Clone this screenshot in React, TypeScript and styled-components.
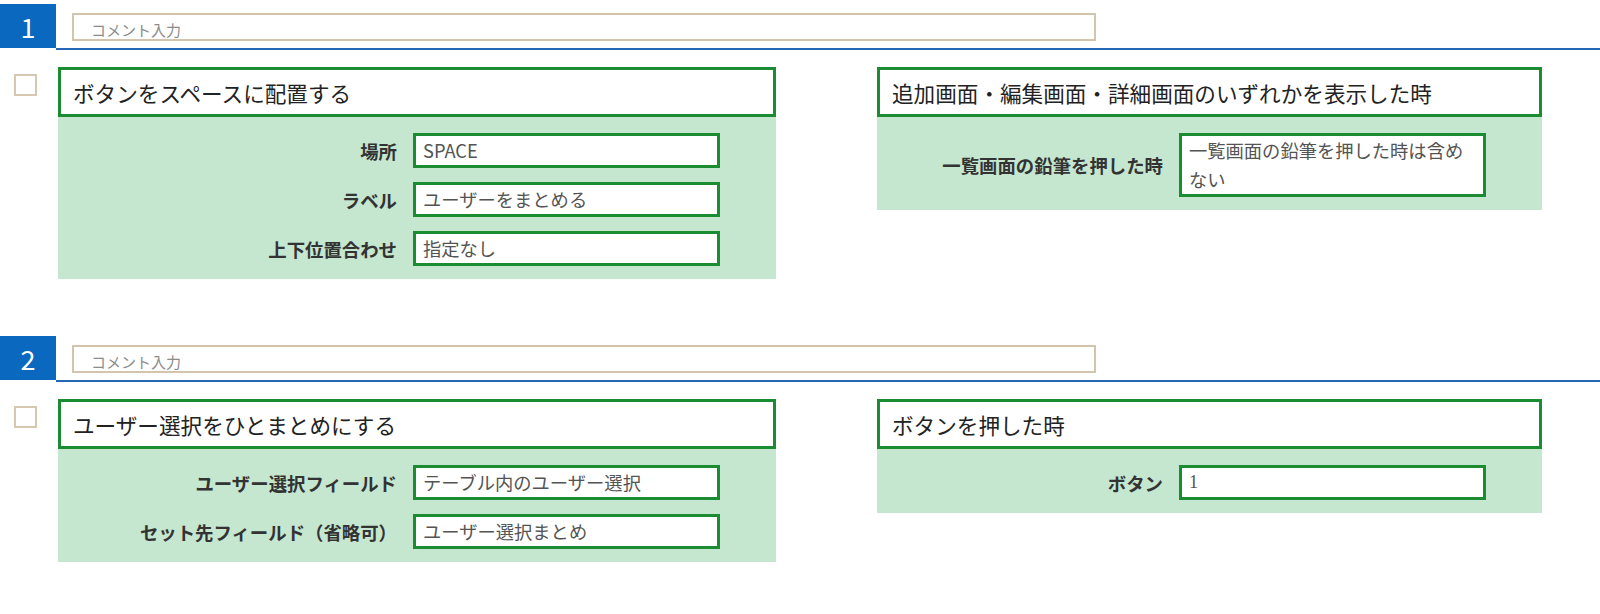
import React from "react"
import styled, { createGlobalStyle } from "styled-components"

const GlobalStyle = createGlobalStyle`
  body {
    margin: 0;
    background: #ffffff;
    font-family: "Noto Sans CJK JP", "Noto Sans", sans-serif;
  }
`

type Field = {
  label: string
  value: string
  serif?: boolean
}

type PanelData = {
  title: string
  fields: Field[]
}

type SectionData = {
  no: number
  action: PanelData
  trigger: PanelData
}

const sections: SectionData[] = [
  {
    no: 1,
    action: {
      title: "ボタンをスペースに配置する",
      fields: [
        { label: "場所", value: "SPACE" },
        { label: "ラベル", value: "ユーザーをまとめる" },
        { label: "上下位置合わせ", value: "指定なし" },
      ],
    },
    trigger: {
      title: "追加画面・編集画面・詳細画面のいずれかを表示した時",
      fields: [
        {
          label: "一覧画面の鉛筆を押した時",
          value: "一覧画面の鉛筆を押した時は含めない",
        },
      ],
    },
  },
  {
    no: 2,
    action: {
      title: "ユーザー選択をひとまとめにする",
      fields: [
        { label: "ユーザー選択フィールド", value: "テーブル内のユーザー選択" },
        { label: "セット先フィールド（省略可）", value: "ユーザー選択まとめ" },
      ],
    },
    trigger: {
      title: "ボタンを押した時",
      fields: [{ label: "ボタン", value: "1", serif: true }],
    },
  },
]

const Section = styled.section`
  padding: 4px 0 53px;
`

const Header = styled.div`
  display: flex;
  align-items: flex-start;
`

const NumberBlock = styled.div`
  width: 56px;
  height: 44px;
  background: #0a68be;
  color: #ffffff;
  font-size: 27px;
  display: flex;
  align-items: center;
  justify-content: center;
`

const HeaderRule = styled.div`
  flex: 1;
  height: 46px;
  box-sizing: border-box;
  padding: 9px 0 0 16px;
  border-bottom: 2px solid #2567b4;
`

const CommentBox = styled.div`
  width: 1024px;
  height: 28px;
  box-sizing: border-box;
  border: 2px solid #d3c4ae;
  padding: 6px 0 0 17px;
  font-size: 15px;
  line-height: 18px;
  color: #8c8c8c;
`

const Content = styled.div`
  display: flex;
  align-items: flex-start;
  margin-top: 17px;
`

const CheckCol = styled.div`
  width: 58px;
  flex: none;
`

const Checkbox = styled.div`
  width: 23px;
  height: 22px;
  box-sizing: border-box;
  margin: 7px 0 0 14px;
  border: 2px solid #d6c7b2;
  background: #ffffff;
`

const Panel = styled.div<{ $width: number; $offset?: number }>`
  width: ${(p) => p.$width}px;
  margin-left: ${(p) => p.$offset ?? 0}px;
  flex: none;
  display: flex;
  flex-direction: column;
`

const PanelTitle = styled.div`
  height: 50px;
  box-sizing: border-box;
  border: 3px solid #1b8c31;
  background: #ffffff;
  padding: 1px 12px 0;
  display: flex;
  align-items: center;
  font-size: 21.6px;
  color: #222222;
  white-space: nowrap;
`

const PanelBody = styled.div`
  background: #c5e6cf;
  padding: 16px 56px 13px 0;
  display: flex;
  flex-direction: column;
  gap: 14px;
`

const FieldRow = styled.div`
  display: flex;
  align-items: center;
  justify-content: flex-end;
  gap: 16px;
`

const FieldLabel = styled.div`
  font-size: 18.4px;
  font-weight: bold;
  color: #333333;
  white-space: nowrap;
`

const FieldValue = styled.div<{ $serif?: boolean }>`
  width: 307px;
  min-height: 35px;
  box-sizing: border-box;
  border: 3px solid #1b8c31;
  background: #ffffff;
  padding: 0 7px;
  font-size: 18.3px;
  line-height: 29px;
  color: #545454;
  font-family: ${(p) =>
    p.$serif
      ? '"Liberation Serif", serif'
      : '"Noto Sans CJK JP", "Noto Sans", sans-serif'};
`

const RulePanel = ({
  data,
  width,
  offset,
}: {
  data: PanelData
  width: number
  offset?: number
}) => (
  <Panel $width={width} $offset={offset}>
    <PanelTitle>{data.title}</PanelTitle>
    <PanelBody>
      {data.fields.map((f) => (
        <FieldRow key={f.label}>
          <FieldLabel>{f.label}</FieldLabel>
          <FieldValue $serif={f.serif}>{f.value}</FieldValue>
        </FieldRow>
      ))}
    </PanelBody>
  </Panel>
)

const App = () => (
  <>
    <GlobalStyle />
    {sections.map((s) => (
      <Section key={s.no}>
        <Header>
          <NumberBlock>{s.no}</NumberBlock>
          <HeaderRule>
            <CommentBox>コメント入力</CommentBox>
          </HeaderRule>
        </Header>
        <Content>
          <CheckCol>
            <Checkbox />
          </CheckCol>
          <RulePanel data={s.action} width={718} />
          <RulePanel data={s.trigger} width={665} offset={101} />
        </Content>
      </Section>
    ))}
  </>
)

export default App
